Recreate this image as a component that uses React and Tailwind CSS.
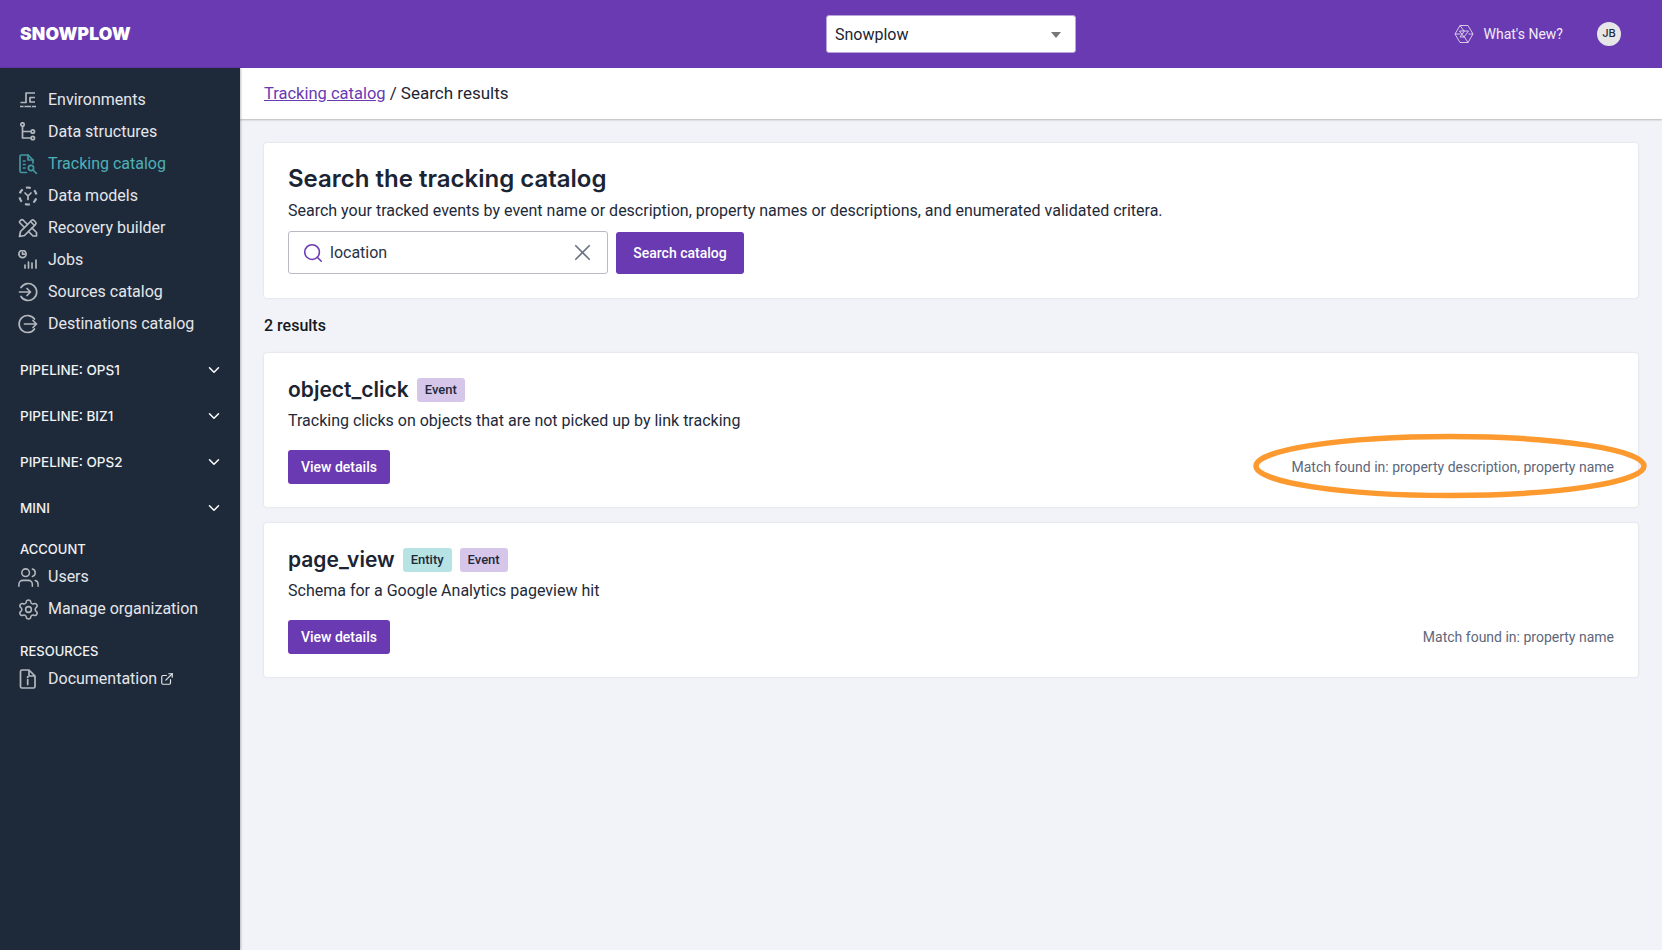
import { ChevronDown, ExternalLink, Search, Settings, Users, X } from 'lucide-react';

const Icon = ({ children }) => (
  <svg viewBox="0 0 20 20" fill="none" stroke="currentColor" strokeWidth="1.7" strokeLinecap="round" strokeLinejoin="round" className="w-5 h-5 shrink-0">
    {children}
  </svg>
);

const EnvironmentsIcon = () => (
  <Icon>
    <path d="M2.500 12.500h5.500V3h9M17 7.500h-5v4.500h5M2 16.500h16" strokeLinecap="butt" />
    <path d="M5.500 16.500h1M13 16.500h1" stroke="#1e2a3a" strokeLinecap="butt" />
  </Icon>
);
const StructuresIcon = () => (
  <Icon>
    <circle cx="4.500" cy="2.500" r="1.700" />
    <path d="M4.500 4.500v5h8M4.500 9.500v6.500h8" />
    <circle cx="14.800" cy="9.500" r="1.700" />
    <circle cx="14.800" cy="16" r="1.700" />
  </Icon>
);
const CatalogIcon = () => (
  <Icon>
    <path d="M8.500 18.500H3.500A1.500 1.500 0 0 1 2 17V2.500A1.500 1.500 0 0 1 3.500 1H10l5 5v3" />
    <path d="M10 1v5h5M5.500 7h1.500M5.500 10.500h1.500M5.500 14h1.500" />
    <circle cx="13" cy="14" r="2.600" />
    <path d="M15 16l3.500 3.500" />
  </Icon>
);
const ModelsIcon = () => (
  <Icon>
    <circle cx="10" cy="10" r="8.500" strokeWidth="2.200" strokeLinecap="butt" strokeDasharray="4.900 4" transform="rotate(-104 10 10)" />
    <path d="M7 7l3 3 3-3M10 10v3.500" />
  </Icon>
);
const RecoveryIcon = () => (
  <Icon>
    <path d="M1.500 18.500l1-5L13.500 2.500a1.800 1.800 0 0 1 2.500 0l1.500 1.500a1.800 1.800 0 0 1 0 2.500L6.500 17.500z" />
    <path d="M6.500 9.500L2 5a1.500 1.500 0 0 1 0-2L3 2a1.500 1.500 0 0 1 2 0l4.500 4.500M10.500 13.500l4.500 4.500h3.500v-3.500l-4.500-4.500M12.500 3.500l4 4" />
  </Icon>
);
const JobsIcon = () => (
  <Icon>
    <circle cx="4.500" cy="4" r="3.600" />
    <path d="M4.500 2.200v2h2M7 18v-3M10.500 18v-6M14 18v-5M18 18v-8" />
  </Icon>
);
const SourcesIcon = () => (
  <Icon>
    <path d="M3 5.500a8.500 8.500 0 1 1 0 9M1.500 10h11M9 6.500l3.500 3.500L9 13.500" />
  </Icon>
);
const DestinationsIcon = () => (
  <Icon>
    <path d="M16.500 5a8.500 8.500 0 1 0 0 10M6.500 10h12M15 6.500l3.500 3.500-3.500 3.500" />
  </Icon>
);
const DocIcon = () => (
  <Icon>
    <path d="M4 19a1.500 1.500 0 0 1-1.500-1.500v-15A1.500 1.500 0 0 1 4 1h7l6 6v10.500a1.500 1.500 0 0 1-1.500 1.500zM11 1v6h6M9.700 10.500v5" />
    <path d="M9.700 8v.2" strokeWidth="2" />
  </Icon>
);

const mainNav = [
  ['Environments', EnvironmentsIcon],
  ['Data structures', StructuresIcon],
  ['Tracking catalog', CatalogIcon, true],
  ['Data models', ModelsIcon],
  ['Recovery builder', RecoveryIcon],
  ['Jobs', JobsIcon],
  ['Sources catalog', SourcesIcon],
  ['Destinations catalog', DestinationsIcon],
];

const NavRow = ({ label, icon: Glyph, active, children }) => (
  <div className={`flex items-center h-8 pl-[18px] gap-[10px] text-base ${active ? 'text-[#4eb0b7]' : 'text-[#e4e6ea]'}`}>
    <span className={`w-5 h-5 flex items-center justify-center ${active ? 'text-[#4297a0]' : 'text-[#b4b8be]'}`}><Glyph /></span>
    <span>{label}</span>
    {children}
  </div>
);

const Pipeline = ({ label }) => (
  <div className="flex items-center justify-between h-[46px] pl-5 pr-[17px] text-[13.5px] font-medium text-[#f1f2f4] font-['Inter',sans-serif]">
    <span>{label}</span>
    <ChevronDown size={18} strokeWidth={2} className="text-white" />
  </div>
);

const Sidebar = () => (
  <aside className="w-[240px] shrink-0 bg-[#1e2a3a] pt-4 shadow-[1px_0_2px_rgba(0,0,0,0.25)] z-10">
    {mainNav.map(([label, glyph, active]) => (
      <NavRow key={label} label={label} icon={glyph} active={active} />
    ))}
    <div className="mt-[7px]">
      {['PIPELINE: OPS1', 'PIPELINE: BIZ1', 'PIPELINE: OPS2', 'MINI'].map((p) => (
        <Pipeline key={p} label={p} />
      ))}
    </div>
    <div className="mt-[7px] -mb-px pl-5 h-6 flex items-center text-[13px] font-medium text-[#f1f2f4] font-['Inter',sans-serif]">ACCOUNT</div>
    <NavRow label="Users" icon={() => <Users size={23} strokeWidth={1.6} className="shrink-0" />} />
    <NavRow label="Manage organization" icon={() => <Settings size={23} strokeWidth={1.6} className="shrink-0" />} />
    <div className="mt-[15px] -mb-px pl-5 h-6 flex items-center text-[13px] font-medium text-[#f1f2f4] font-['Inter',sans-serif]">RESOURCES</div>
    <NavRow label="Documentation" icon={DocIcon}>
      <ExternalLink size={14} strokeWidth={2} className="-ml-[7px] text-[#e4e6ea]" />
    </NavRow>
  </aside>
);

const Header = () => (
  <header className="h-[68px] shrink-0 bg-[#6a3ab2] flex items-center pl-5 pr-[41px]">
    <div className="w-[806px] text-[17.5px] font-black text-white tracking-[0.01em] font-['Inter',sans-serif]">SNOWPLOW</div>
    <div className="w-[250px] h-[38px] bg-white rounded-[3px] border border-[#b9a6d8] flex items-center justify-between pl-2 pr-[14px] pt-px text-base text-[#1b2533]">
      <span>Snowplow</span>
      <span className="w-0 h-0 border-x-[5px] border-x-transparent border-t-[6px] border-t-[#777]" />
    </div>
    <div className="ml-auto flex items-center text-sm text-[#f1ecf8]">
      <svg viewBox="0 0 20 20" fill="none" stroke="currentColor" strokeWidth="0.8" className="w-5 h-5">
        <path d="M6 1.500h8l5 8.500-5 8.500H6L1 10zM6 1.500l4 5.500h4.500l-4.500 6-4.500-6H10M14 18.500l-3.500-5.500H6l4.500-6M1 10h5.500M19 10h-4.500" />
      </svg>
      <span className="ml-[10px]">What's New?</span>
      <div className="ml-[34px] w-6 h-6 rounded-full bg-[#e6e6e9] text-[#1e2a3a] text-[11px] font-medium flex items-center justify-center font-['Inter',sans-serif]">JB</div>
    </div>
  </header>
);

const Tag = ({ children, kind }) => (
  <span className={`h-6 px-2 rounded-[3px] flex items-center text-[13px] font-medium text-[#1e2a3a] ${kind === 'entity' ? 'bg-[#b7e3e4]' : 'bg-[#d6c6ea]'}`}>
    {children}
  </span>
);

const ResultCard = ({ name, tags, desc, match, children }) => (
  <section className="relative bg-white rounded-[3px] shadow-[0_0_2px_rgba(30,42,58,0.18)] px-6 pt-[25px] h-[154px]">
    <div className="flex items-center gap-2 h-6">
      <h2 className="text-[21px] font-semibold text-[#1a2433] font-['Inter',sans-serif]">{name}</h2>
      {tags.map((t) => <Tag key={t} kind={t.toLowerCase()}>{t}</Tag>)}
    </div>
    <p className="mt-[7px] text-base leading-6 text-[#1e2a3a]">{desc}</p>
    <div className="mt-[17px] flex items-center justify-between">
      <button className="h-[34px] px-[13px] rounded-[3px] bg-[#6a3ab2] text-white text-sm font-medium">View details</button>
      <span className="text-sm text-[#5e677a]">{match}</span>
    </div>
    {children}
  </section>
);

export default function App() {
  return (
    <div className="h-screen flex flex-col overflow-hidden font-['Roboto',sans-serif]">
      <Header />
      <div className="flex flex-1 min-h-0">
        <Sidebar />
        <main className="flex-1 min-w-0 bg-[#f2f3f8]">
          <div className="h-[51px] bg-white flex items-center pl-6 text-[17px] text-[#1b2533] shadow-[0_1px_2px_rgba(0,0,0,0.25)]">
            <div className="flex items-baseline">
              <a className="text-[16.5px] text-[#6a3ab2] underline">Tracking catalog</a>
              <span className="ml-[4px]">/ Search results</span>
            </div>
          </div>
          <div className="pt-[24px] pl-6 pr-6">
            <section className="bg-white rounded-[3px] shadow-[0_0_2px_rgba(30,42,58,0.18)] h-[155px] px-6 pt-[20px]">
              <h1 className="text-[24px] leading-8 font-semibold text-[#1a2433] font-['Inter',sans-serif]">Search the tracking catalog</h1>
              <p className="mt-[4px] text-base leading-6 text-[#1e2a3a]">Search your tracked events by event name or description, property names or descriptions, and enumerated validated critera.</p>
              <div className="mt-[8px] flex items-center gap-2">
                <div className="w-[320px] h-[43px] border border-[#b8bbc2] rounded-[3px] flex items-center pl-[13px] pr-[11px]">
                  <Search size={22} strokeWidth={1.7} className="text-[#6a3ab2]" />
                  <span className="ml-[6px] text-base text-[#2a3443]">location</span>
                  <X size={27} strokeWidth={1.5} className="ml-auto text-[#6a7382]" />
                </div>
                <button className="w-[128px] h-[42px] rounded-[3px] bg-[#6a3ab2] text-white text-sm font-medium">Search catalog</button>
              </div>
            </section>
            <div className="mt-[17px] mb-[17px] h-[21px] flex items-center text-base font-medium text-[#15181d]">2 results</div>
            <div className="flex flex-col gap-4">
              <ResultCard
                name="object_click"
                tags={['Event']}
                desc="Tracking clicks on objects that are not picked up by link tracking"
                match="Match found in: property description, property name"
              >
                <svg viewBox="0 0 394 64" fill="none" className="absolute left-[989px] top-[81px] w-[394px] h-[64px] overflow-visible">
                  <ellipse cx="197" cy="32" rx="194" ry="29.500" stroke="#fd9a2f" strokeWidth="5.500" />
                </svg>
              </ResultCard>
              <ResultCard
                name="page_view"
                tags={['Entity', 'Event']}
                desc="Schema for a Google Analytics pageview hit"
                match="Match found in: property name"
              />
            </div>
          </div>
        </main>
      </div>
    </div>
  );
}
